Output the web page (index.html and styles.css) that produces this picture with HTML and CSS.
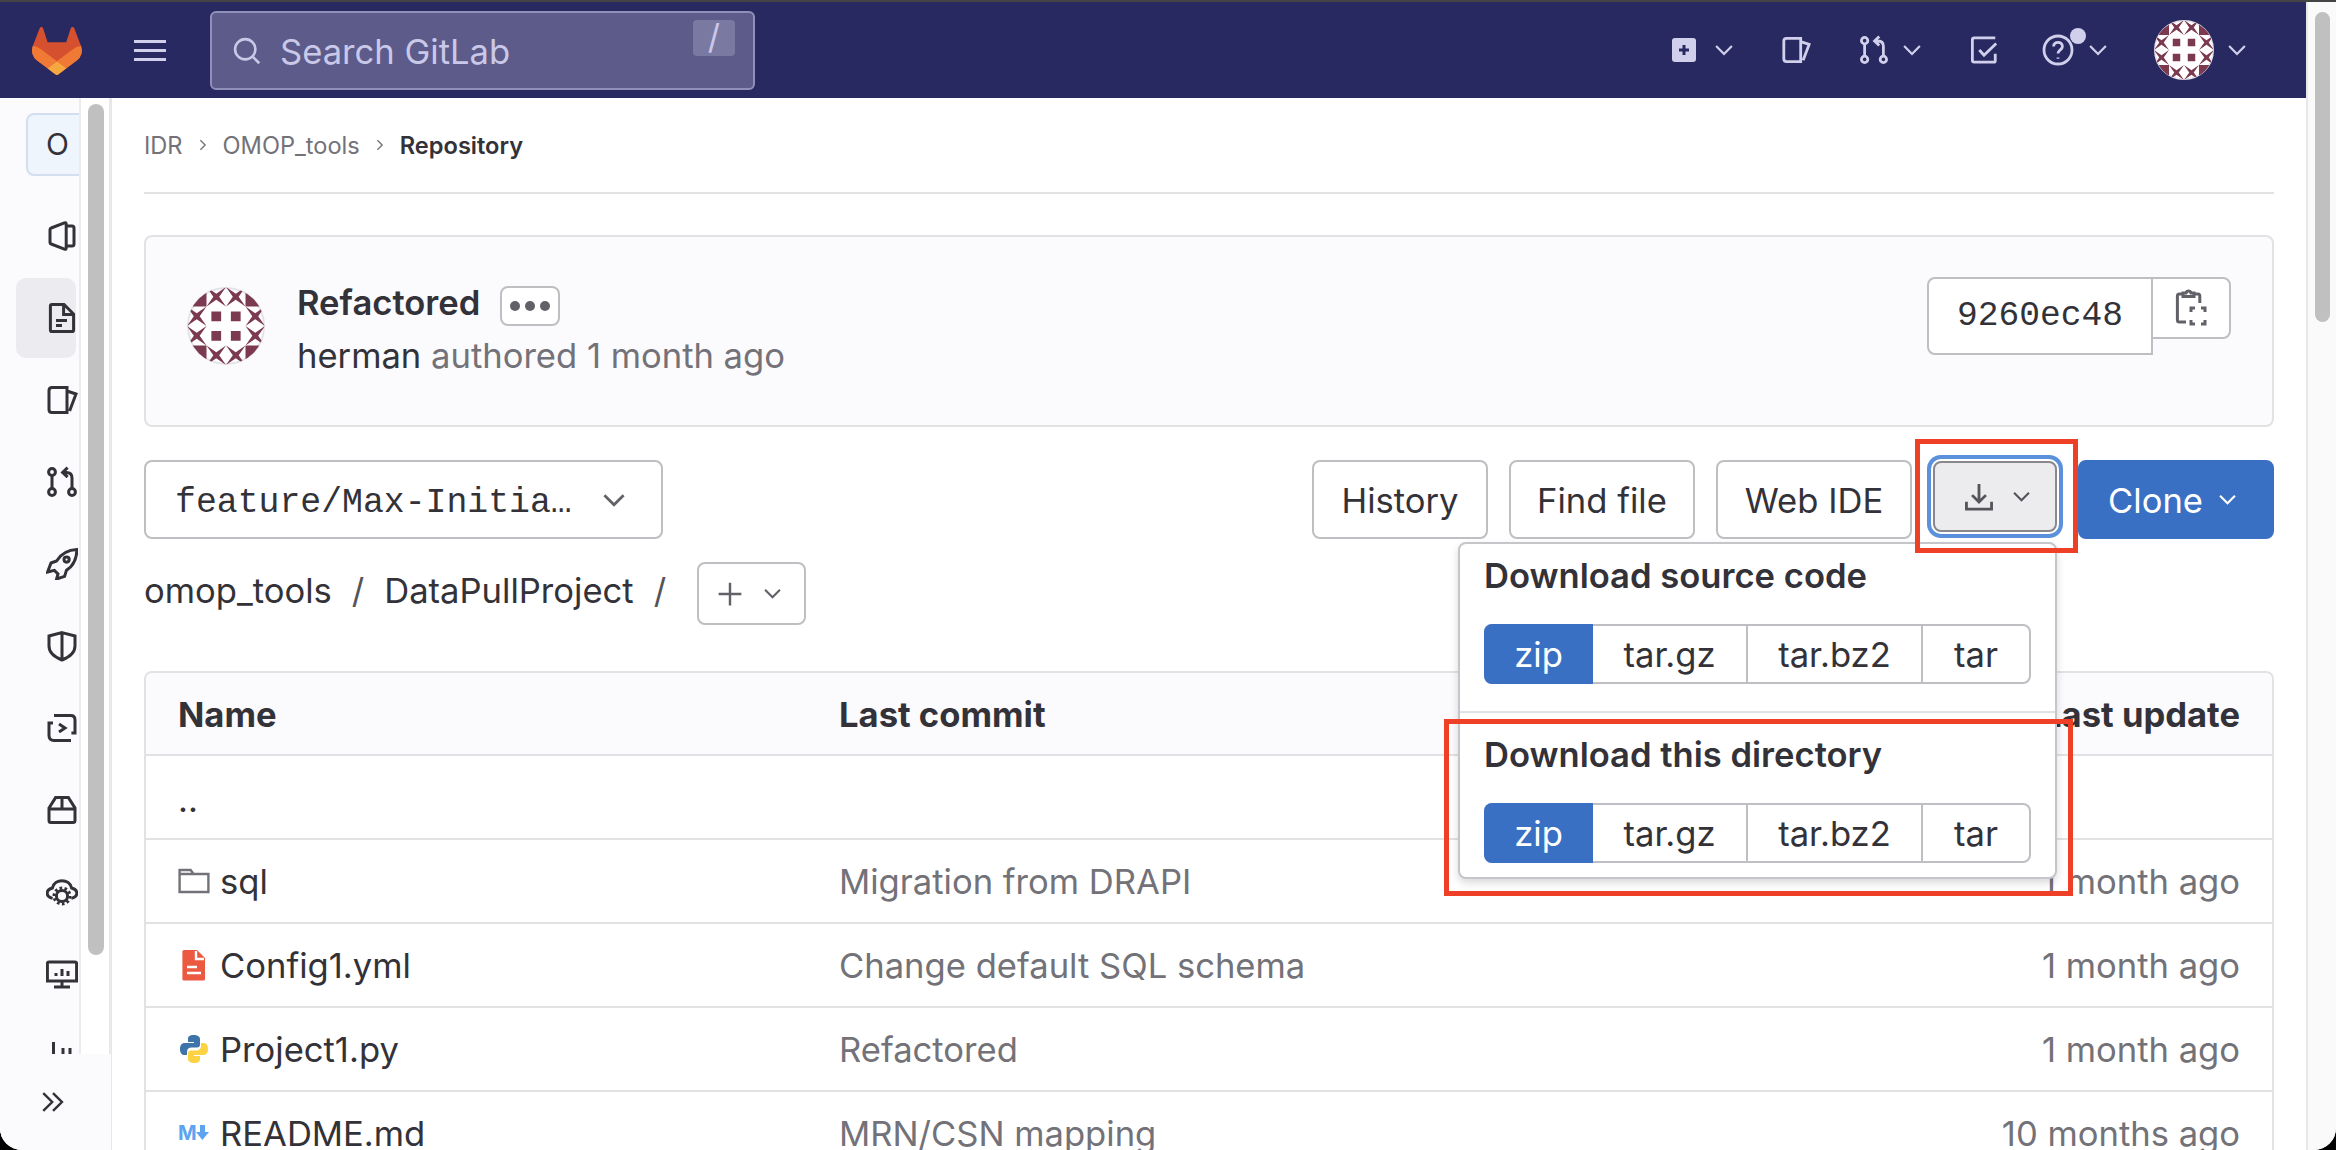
FILE: index.html
```html
<!DOCTYPE html>
<html lang="en">
<head>
    <meta charset="UTF-8">
    <meta name="viewport" content="width=device-width, initial-scale=1.0">
    <title>Repository - OMOP_tools</title>
    <link rel="stylesheet" href="styles.css">
</head>
<body>
<!-- icon set, 16 grid -->
<svg class="defs" width="0" height="0">
    <symbol id="i-chev" viewBox="0 0 16 16"><path d="M1 4.500 8 11.500 15 4.500"/></symbol>
    <symbol id="i-project" viewBox="0 0 16 16"><path d="M2.600 4 9.200 1.400q.9-.3.9.6v12q0 .9-.9.6L2.600 12q-.6-.2-.6-.8V4.800q0-.6.6-.8zM10.100 3h2.900q1 0 1 1v8q0 1-1 1h-2.900"/></symbol>
    <symbol id="i-doc" viewBox="0 0 16 16"><path d="M3 1.200h6L13.800 6v8q0 .8-.8.8H3q-.8 0-.8-.8V2q0-.8.8-.8zM8.800 1.200V6.200h5M5 9.200h5.500M5 11.800h3"/></symbol>
    <symbol id="i-issues" viewBox="0 0 16 16"><path d="M3 1.800h7.500v12.400H3q-1.500 0-1.500-1.500V3.300Q1.500 1.800 3 1.800zM10.500 3.500 15 5l-3.200 8.500"/></symbol>
    <symbol id="i-mr" viewBox="0 0 16 16"><circle cx="3" cy="3" r="1.700"/><circle cx="3" cy="13" r="1.700"/><circle cx="13" cy="13" r="1.700"/><path d="M3 4.700v6.600M13 11.300V6q0-2.800-2.800-2.800H8.500M10.800.8 8.300 3.200l2.500 2.400"/></symbol>
    <symbol id="i-rocket" viewBox="0 0 16 16"><path d="M15.500.8C10.500 1 7.500 3 5.300 6.500L2.500 7.500.8 12l3.400-.8L6 13l-.7 2.500 4-1.300.9-3C13.800 9 15.300 5.500 15.500.8z"/><circle cx="10.300" cy="5.800" r="1.300"/></symbol>
    <symbol id="i-shield" viewBox="0 0 16 16"><path d="M8 1.300 14.500 3v5c0 3.200-2.700 5.500-6.500 7C4.200 13.500 1.500 11.200 1.500 8V3zM8 1.300V15"/></symbol>
    <symbol id="i-ci" viewBox="0 0 16 16"><path d="M4 1.800h8.300q2.200 0 2.200 2.200v6.500h-1.800M12.500 14.200H4q-2.500 0-2.500-2.500V5.500h2M6.500 6l3 2-3 2"/></symbol>
    <symbol id="i-package" viewBox="0 0 16 16"><path d="M1.500 7 4.800 1.800h6.400L14.500 7v6.200q0 1-1 1h-11q-1 0-1-1zM1.500 7.500h13M8 1.800v5.700"/></symbol>
    <symbol id="i-cloud" viewBox="0 0 16 16"><path d="M3.300 11.200C-.2 10.500-.4 7 3.200 6c1-4.800 8.600-4.800 9.600 0 3.600 1 3.400 4.500-.1 5.200"/><circle cx="8" cy="10" r="2.800"/><circle cx="8" cy="10" r="4" stroke-dasharray="1.300 1.200"/></symbol>
    <symbol id="i-monitor" viewBox="0 0 16 16"><path d="M1.500 2h13q.8 0 .8.800v8.700H.7V2.800q0-.8.8-.8zM4 14.500h8M8 11.500v3M5 7.500v1.500M8 5.500v3.500M11 6.500v2.500"/></symbol>
    <symbol id="i-help" viewBox="0 0 16 16"><circle cx="8" cy="8" r="7"/><path d="M5.800 6.200C5.800 3.500 10.200 3.500 10.200 6.200 10.200 8 8 7.800 8 9.800M8 11.800v.6"/></symbol>
    <symbol id="i-todo" viewBox="0 0 16 16"><path d="M14 1.500H2.800q-1 0-1 1v11q0 1 1 1h10.400q.8 0 .8-.8V10M5.500 8l2.500 2.800L14.500 4.500"/></symbol>
    <symbol id="i-avatar" viewBox="0 0 80 80">
        <circle cx="40" cy="40" r="39" fill="#fff" stroke="#e4e3ea" stroke-width="2"/>
        <g fill="#7b3a4f" clip-path="url(#avatar-clip)">
            <path d="M0 0h20v20H0zM60 0h20v20H60zM0 60h20v20H0zM60 60h20v20H60z"/>
            <path id="x-cell" d="M20 0l10 7 10-7-7 10 7 10-10-7-10 7 7-10z"/>
            <use href="#x-cell" x="20"/>
            <use href="#x-cell" y="60"/>
            <use href="#x-cell" x="20" y="60"/>
            <use href="#x-cell" x="-20" y="20"/>
            <use href="#x-cell" x="-20" y="40"/>
            <use href="#x-cell" x="40" y="20"/>
            <use href="#x-cell" x="40" y="40"/>
            <path d="M25 25h10v10H25zM45 25h10v10H45zM25 45h10v10H25zM45 45h10v10H45z"/>
        </g>
    </symbol>
    <clipPath id="avatar-clip"><circle cx="40" cy="40" r="39.500"/></clipPath>
</svg>

<div class="window">
    <div class="page">
        <header class="navbar">
            <svg class="logo" viewBox="0 0 25 24">
                <path fill="#d4502f" d="m24.507 9.500-.034-.09L21.082.562a.896.896 0 0 0-1.694.091l-2.290 7.010H7.825L5.535.653a.898.898 0 0 0-1.694-.09L.451 9.411.416 9.500a6.297 6.297 0 0 0 2.090 7.278l.012.01.03.022 5.160 3.867 2.560 1.935 1.554 1.176a1.051 1.051 0 0 0 1.268 0l1.555-1.176 2.560-1.935 5.197-3.890.014-.01A6.297 6.297 0 0 0 24.507 9.500Z"/>
                <path fill="#f07a35" d="m24.507 9.500-.034-.09a11.440 11.440 0 0 0-4.560 2.051l-7.447 5.632 4.742 3.584 5.197-3.890.014-.01A6.297 6.297 0 0 0 24.507 9.500Z"/>
                <path fill="#f5a83f" d="m7.707 20.677 2.560 1.935 1.555 1.176a1.051 1.051 0 0 0 1.268 0l1.555-1.176 2.560-1.935-4.743-3.584-4.755 3.584Z"/>
                <path fill="#f07a35" d="M5.010 11.461a11.430 11.430 0 0 0-4.560-2.050L.416 9.500a6.297 6.297 0 0 0 2.090 7.278l.012.01.03.022 5.160 3.867 4.745-3.584-7.444-5.632Z"/>
            </svg>
            <div class="burger"><span></span><span></span><span></span></div>
            <div class="search">
                <svg class="search-icon ico" viewBox="0 0 16 16"><circle cx="7" cy="7" r="5.800"/><path d="m11.200 11.200 3.800 3.800"/></svg>
                <span class="search-text">Search GitLab</span>
                <span class="search-key">/</span>
            </div>
            <div class="nav-right">
                <svg class="nav-plus" viewBox="0 0 24 24"><rect width="24" height="24" rx="3" fill="#d1d0ec"/><path d="M12 7v10M7 12h10" stroke="#292961" stroke-width="3"/></svg>
                <svg class="ico nav-chev chev-plus"><use href="#i-chev"/></svg>
                <svg class="ico nav-icon gap-icon"><use href="#i-issues"/></svg>
                <svg class="ico nav-icon gap-icon"><use href="#i-mr"/></svg>
                <svg class="ico nav-chev"><use href="#i-chev"/></svg>
                <svg class="ico nav-icon gap-icon"><use href="#i-todo"/></svg>
                <span class="nav-help">
                    <svg class="ico nav-help-icon"><use href="#i-help"/></svg>
                    <span class="nav-dot"></span>
                </span>
                <svg class="ico nav-chev chev-help"><use href="#i-chev"/></svg>
                <svg class="nav-avatar"><use href="#i-avatar"/></svg>
                <svg class="ico nav-chev"><use href="#i-chev"/></svg>
            </div>
        </header>

        <div class="body-row">
            <aside class="sidebar">
                <div class="rail">
                    <div class="context-tile">O</div>
                    <ul class="rail-list">
                        <li><svg class="ico"><use href="#i-project"/></svg></li>
                        <li class="active"><svg class="ico"><use href="#i-doc"/></svg></li>
                        <li><svg class="ico"><use href="#i-issues"/></svg></li>
                        <li><svg class="ico"><use href="#i-mr"/></svg></li>
                        <li><svg class="ico"><use href="#i-rocket"/></svg></li>
                        <li><svg class="ico"><use href="#i-shield"/></svg></li>
                        <li><svg class="ico"><use href="#i-ci"/></svg></li>
                        <li><svg class="ico"><use href="#i-package"/></svg></li>
                        <li><svg class="ico"><use href="#i-cloud"/></svg></li>
                        <li><svg class="ico"><use href="#i-monitor"/></svg></li>
                        <li class="clipped"><svg class="ico partial"><path d="M7.500 0V14M17 6V14M24 6V14"/></svg></li>
                    </ul>
                </div>
                <div class="side-scroll"><div class="side-thumb"></div></div>
                <div class="collapse">
                    <svg class="ico collapse-icon" viewBox="0 0 16 16"><path d="M2 2.500 7.500 8 2 13.500M8 2.500 13.500 8 8 13.500"/></svg>
                </div>
            </aside>

            <main class="content">
                <nav class="crumbs">
                    <span>IDR</span>
                    <svg class="ico crumb-sep" viewBox="0 0 16 16"><path d="m5 2.500 5.500 5.500L5 13.500"/></svg>
                    <span>OMOP_tools</span>
                    <svg class="ico crumb-sep" viewBox="0 0 16 16"><path d="m5 2.500 5.500 5.500L5 13.500"/></svg>
                    <strong>Repository</strong>
                </nav>

                <section class="commit">
                    <svg class="commit-avatar"><use href="#i-avatar"/></svg>
                    <div class="commit-info">
                        <div class="commit-title">
                            <strong>Refactored</strong>
                            <span class="more-btn"><i></i><i></i><i></i></span>
                        </div>
                        <div class="commit-meta"><span class="author">herman</span> authored 1 month ago</div>
                    </div>
                    <div class="commit-sha">
                        <span class="sha">9260ec48</span>
                        <span class="copy-btn">
                            <svg class="ico copy-icon" viewBox="0 0 16 20"><path d="M9.800 3h1.600q1 0 1 1v3.500M4 3H2.200q-1 0-1 1v12q0 1 1 1h3.300M4 4.200V2.500h1.500a1.300 1.300 0 0 1 2.500 0h1.500v1.700z"/><path d="M8 12v-2h2M13 10h2v2M15 16v2h-2M10 18H8v-2"/></svg>
                        </span>
                    </div>
                </section>

                <div class="tree-bar">
                    <div class="branch-btn">
                        <span class="branch-name">feature/Max-Initia…</span>
                        <svg class="ico chev-md"><use href="#i-chev"/></svg>
                    </div>
                    <div class="tree-actions">
                        <span class="btn btn-history">History</span>
                        <span class="btn btn-find">Find file</span>
                        <span class="btn btn-ide">Web IDE</span>
                        <div class="download-wrap">
                            <span class="download-btn">
                                <svg class="ico dl-icon" viewBox="0 0 16 16"><path d="M8 1v9.500M4.300 7 8 10.700 11.700 7M1.300 10.500v4h13.400v-4"/></svg>
                                <svg class="ico chev-sm"><use href="#i-chev"/></svg>
                            </span>
                            <div class="download-menu">
                                <div class="menu-part">
                                    <h3>Download source code</h3>
                                    <div class="format-group">
                                        <span class="fmt-zip">zip</span><span class="fmt-gz">tar.gz</span><span class="fmt-bz">tar.bz2</span><span class="fmt-tar">tar</span>
                                    </div>
                                </div>
                                <div class="menu-part menu-part-second">
                                    <h3>Download this directory</h3>
                                    <div class="format-group">
                                        <span class="fmt-zip">zip</span><span class="fmt-gz">tar.gz</span><span class="fmt-bz">tar.bz2</span><span class="fmt-tar">tar</span>
                                    </div>
                                </div>
                            </div>
                        </div>
                        <span class="btn btn-clone">Clone <svg class="ico chev-sm"><use href="#i-chev"/></svg></span>
                    </div>
                </div>

                <div class="path-row">
                    <span class="path-text">omop_tools</span>
                    <span class="path-text path-sep">/</span>
                    <span class="path-text">DataPullProject</span>
                    <span class="path-text path-sep">/</span>
                    <span class="add-btn">
                        <svg class="ico plus-icon" viewBox="0 0 16 16"><path d="M8 1v14M1 8h14"/></svg>
                        <svg class="ico chev-sm"><use href="#i-chev"/></svg>
                    </span>
                </div>

                <section class="files">
                    <div class="file-row file-head">
                        <span class="col-name">Name</span>
                        <span class="col-commit">Last commit</span>
                        <span class="col-date">Last update</span>
                    </div>
                    <div class="file-row">
                        <span class="col-name dots">..</span>
                    </div>
                    <div class="file-row">
                        <span class="col-name">
                            <svg class="ico file-icon folder" viewBox="0 0 16 16"><path d="M.8 2.500h5.500l1.500 2h7.400v9H.8zM.8 4.500h7"/></svg>sql
                        </span>
                        <span class="col-commit">Migration from DRAPI</span>
                        <span class="col-date">1 month ago</span>
                    </div>
                    <div class="file-row">
                        <span class="col-name">
                            <svg class="file-icon" viewBox="0 0 16 16"><path fill="#ec5941" d="M3 .5h6.500L13.500 4.500V15q0 .8-.8.8H3q-.8 0-.8-.8V1.300Q2.200.5 3 .5z"/><path d="M9 1v4h4M4.500 9h5M4.500 12h7" fill="none" stroke="#fff" stroke-width="1.200"/></svg>Config1.yml
                        </span>
                        <span class="col-commit">Change default SQL schema</span>
                        <span class="col-date">1 month ago</span>
                    </div>
                    <div class="file-row">
                        <span class="col-name">
                            <svg class="file-icon" viewBox="0 0 16 16"><path fill="#3f74a8" d="M8 1C5.500 1 5 2 5 3v1.500h3V5H3.300C2 5 1 6 1 8s1 3 2.200 3H4.500V9.500C4.500 8 5.500 7.300 6.800 7.300h2.700C10.500 7.300 11 6.700 11 5.800V3c0-1.200-1.300-2-3-2z"/><path fill="#fdd343" d="M8 15c2.500 0 3-1 3-2v-1.500H8V11h4.700C14 11 15 10 15 8s-1-3-2.200-3H11.500v1.500c0 1.500-1 2.200-2.300 2.200H6.500C5.500 8.700 5 9.300 5 10.200V13c0 1.200 1.300 2 3 2z"/></svg>Project1.py
                        </span>
                        <span class="col-commit">Refactored</span>
                        <span class="col-date">1 month ago</span>
                    </div>
                    <div class="file-row">
                        <span class="col-name">
                            <svg class="file-icon" viewBox="0 0 16 16"><text x="0" y="11.500" class="md-m">M</text><path fill="#5ea3f0" d="M11 4h2.500v3.500H15.500L12.200 11.500 9 7.500h2z"/></svg>README.md
                        </span>
                        <span class="col-commit">MRN/CSN mapping</span>
                        <span class="col-date">10 months ago</span>
                    </div>
                </section>
            </main>
        </div>
    </div>

    <div class="page-scroll"><div class="page-thumb"></div></div>

    <!-- red annotation boxes -->
    <div class="mark mark-btn"></div>
    <div class="mark mark-dir"></div>
</div>
</body>
</html>
```

FILE: styles.css
```css
* {
    box-sizing: border-box;
}

html,
body {
    margin: 0;
    padding: 0;
    height: 1150px;
    overflow: hidden;
    background-color: #000;
}

body {
    font-family: Inter, "Noto Sans", sans-serif;
    font-size: 34.6px;
    color: #333238;
}

.defs {
    position: absolute;
}

.ico {
    width: 32px;
    height: 32px;
    fill: none;
    stroke: currentColor;
    stroke-width: 1.5;
    flex: none;
}

.window {
    position: relative;
    height: 1150px;
    display: flex;
    background-color: #fff;
    border-top: 2px solid #444;
    border-radius: 0 0 22px 22px;
    overflow: hidden;
}

.page {
    flex: 1;
    min-width: 0;
    display: flex;
    flex-direction: column;
}

/* top bar */
.navbar {
    height: 96px;
    flex: none;
    display: flex;
    align-items: center;
    padding: 0 60px 0 32px;
    background-color: #292961;
    color: #d1d0ec;
}

.logo {
    width: 50px;
    height: 48px;
    margin-top: 2px;
}

.burger {
    display: flex;
    flex-direction: column;
    gap: 6px;
    width: 32px;
    margin-left: 52px;
}

.burger span {
    height: 3px;
    background-color: #d1d0ec;
}

.search {
    width: 545px;
    height: 79px;
    margin-left: 44px;
    margin-top: 1px;
    display: flex;
    align-items: center;
    padding: 0 18px 0 21px;
    background-color: #5c5b8a;
    border: 2px solid #8f8fb8;
    border-radius: 6px;
    color: #c9c8e8;
}

.search-icon {
    width: 28px;
    height: 28px;
}

.search-text {
    margin-left: 19px;
    flex: 1;
}

.search-key {
    width: 42px;
    height: 36px;
    margin-top: -26px;
    background-color: #7a79a2;
    border-radius: 4px;
    text-align: center;
    line-height: 34px;
    font-size: 34px;
}

.nav-right {
    margin-left: auto;
    display: flex;
    align-items: center;
}

.nav-plus {
    width: 24px;
    height: 24px;
}

.nav-chev {
    width: 18px;
    height: 18px;
    margin-left: 14px;
    stroke-width: 2;
}

.chev-plus {
    margin-left: 19px;
}

.nav-icon {
    width: 30px;
    height: 30px;
}

.gap-icon {
    margin-left: 48px;
}

.nav-help {
    position: relative;
    margin-left: 43px;
    display: flex;
}

.nav-help-icon {
    width: 32px;
    height: 32px;
    stroke-width: 1.4;
}

.nav-dot {
    position: absolute;
    top: -6px;
    right: -12px;
    width: 16px;
    height: 16px;
    border-radius: 50%;
    background-color: #d1d0ec;
}

.chev-help {
    margin-left: 15px;
}

.nav-avatar {
    width: 60px;
    height: 60px;
    margin-left: 47px;
}

.body-row {
    flex: 1;
    display: flex;
    min-height: 0;
}

/* left sidebar */
.sidebar {
    position: relative;
    width: 112px;
    flex: none;
    display: flex;
    border-right: 3px solid #e8e8ea;
}

.rail {
    width: 81px;
    flex: none;
    padding-top: 15px;
    background-color: #fbfafd;
    border-right: 2px solid #ececef;
    overflow: hidden;
    color: #333238;
}

.context-tile {
    width: 70px;
    height: 63px;
    margin-left: 26px;
    padding-left: 18px;
    line-height: 59px;
    font-size: 30px;
    background-color: #eef5fd;
    border: 2px solid #d3dfee;
    border-radius: 8px;
}

.rail-list {
    list-style: none;
    margin: 19px 0 0;
    padding: 0;
}

.rail-list li {
    height: 82px;
    display: flex;
    align-items: center;
    padding-left: 46px;
}

.rail-list li.active {
    margin: 1px 0 1px 16px;
    height: 80px;
    width: 60px;
    padding-left: 30px;
    background-color: #ebebf0;
    border-radius: 10px;
}

.rail-list li.clipped {
    align-items: flex-start;
    padding-top: 27px;
}

.partial {
    height: 14px;
    stroke-width: 3;
}

.side-scroll {
    flex: 1;
    padding: 6px 4px 0 7px;
    background-color: #fff;
}

.side-thumb {
    width: 16px;
    height: 851px;
    background-color: #c0c0c0;
    border-radius: 8px;
}

.collapse {
    position: absolute;
    left: 0;
    bottom: 0;
    width: 111px;
    height: 96px;
    background-color: #fbfafd;
    display: flex;
    align-items: center;
    padding-left: 40px;
}

.collapse-icon {
    width: 26px;
    height: 26px;
}

/* main column */
.content {
    flex: 1;
    min-width: 0;
    padding: 0 32px;
    overflow: hidden;
}

.crumbs {
    height: 96px;
    display: flex;
    align-items: center;
    gap: 13px;
    border-bottom: 2px solid #e2e2e4;
    font-size: 23.6px;
    color: #737278;
}

.crumbs strong {
    color: #333238;
    font-weight: 600;
}

.crumb-sep {
    width: 14px;
    height: 14px;
}

.commit {
    height: 192px;
    margin-top: 41px;
    display: flex;
    align-items: flex-start;
    padding: 40px 41px 0 41px;
    background-color: #fbfafd;
    border: 2px solid #e2e2e4;
    border-radius: 8px;
}

.commit-avatar {
    width: 78px;
    height: 78px;
    margin-top: 10px;
    flex: none;
}

.commit-info {
    margin-left: 32px;
    flex: 1;
}

.commit-title {
    display: flex;
    align-items: center;
    gap: 20px;
    height: 50px;
}

.commit-title strong {
    margin-top: -1px;
    font-weight: 600;
}

.more-btn {
    width: 60px;
    height: 40px;
    display: flex;
    align-items: center;
    justify-content: center;
    gap: 5px;
    background-color: #fff;
    border: 2px solid #bfbfc3;
    border-radius: 8px;
    margin-top: 8px;
}

.more-btn i {
    width: 10px;
    height: 10px;
    border-radius: 50%;
    background-color: #626168;
}

.commit-meta {
    margin-top: 7px;
    color: #737278;
}

.author {
    color: #333238;
}

.commit-sha {
    display: flex;
    align-items: flex-start;
}

.sha {
    width: 226px;
    height: 78px;
    display: block;
    text-align: center;
    line-height: 74px;
    font-family: "Liberation Mono", monospace;
    font-size: 34.6px;
    background-color: #fff;
    border: 2px solid #bfbfc3;
    border-radius: 8px 0 0 8px;
}

.copy-btn {
    width: 80px;
    height: 62px;
    margin-left: -2px;
    display: flex;
    align-items: center;
    justify-content: center;
    background-color: #fff;
    border: 2px solid #bfbfc3;
    border-radius: 0 8px 8px 0;
    color: #626168;
}

.copy-icon {
    width: 32px;
    height: 40px;
}

.tree-bar {
    height: 79px;
    margin-top: 33px;
    display: flex;
    justify-content: space-between;
}

.branch-btn {
    width: 519px;
    display: flex;
    align-items: center;
    justify-content: space-between;
    padding: 0 36px 0 29px;
    background-color: #fff;
    border: 2px solid #bfbfc3;
    border-radius: 8px;
}

.branch-name {
    margin-top: 5px;
    font-family: "Liberation Mono", monospace;
    font-size: 34.8px;
}

.chev-md {
    width: 22px;
    height: 22px;
    stroke-width: 2;
    color: #626168;
}

.chev-sm {
    width: 17px;
    height: 17px;
    stroke-width: 2;
}

.tree-actions {
    display: flex;
    gap: 21px;
}

.btn {
    display: flex;
    align-items: center;
    justify-content: center;
    background-color: #fff;
    border: 2px solid #bfbfc3;
    border-radius: 8px;
}

.btn-history {
    width: 176px;
}

.btn-find {
    width: 186px;
}

.btn-ide {
    width: 196px;
}

.btn-clone {
    width: 196px;
    gap: 16px;
    padding-right: 8px;
    color: #fff;
    background-color: #3a70c4;
    border-color: #3a70c4;
}

.download-wrap {
    position: relative;
    width: 124px;
}

.download-btn {
    height: 71px;
    display: flex;
    align-items: center;
    gap: 19px;
    padding-left: 29px;
    margin-top: 1px;
    color: #55545a;
    background-color: #ececef;
    border: 2px solid #89888d;
    border-radius: 8px;
    box-shadow: 0 0 0 2px #fff, 0 0 0 6px #5a90dc;
}

.dl-icon {
    width: 30px;
    height: 30px;
}

.download-menu {
    position: absolute;
    z-index: 5;
    top: 82px;
    right: 0;
    width: 599px;
    height: 337px;
    background-color: #fff;
    border: 2px solid #c6c6ca;
    border-radius: 8px;
    box-shadow: 0 4px 8px rgba(0, 0, 0, 0.15);
}

.menu-part {
    height: 167px;
    padding: 11px 24px 0 24px;
}

.menu-part-second {
    border-top: 2px solid #e2e2e4;
    padding-top: 21px;
}

.menu-part h3 {
    margin: 0;
    font-size: 34.6px;
    font-weight: 600;
    line-height: 40px;
}

.format-group {
    display: flex;
    height: 60px;
    margin-top: 29px;
    border: 2px solid #bfbfc3;
    border-radius: 8px;
}

.format-group span {
    display: flex;
    align-items: center;
    justify-content: center;
    border-right: 2px solid #bfbfc3;
}

.format-group span:last-child {
    border-right: none;
}

.format-group .fmt-zip {
    width: 109px;
    margin: -2px 0 -2px -2px;
    color: #fff;
    background-color: #3a70c4;
    border-right: none;
    border-radius: 8px 0 0 8px;
}

.fmt-gz {
    width: 155px;
}

.fmt-bz {
    width: 175px;
}

.fmt-tar {
    flex: 1;
}

.path-row {
    height: 63px;
    margin-top: 23px;
    display: flex;
    align-items: center;
}

.path-text {
    margin-top: -7px;
}

.path-sep {
    margin-left: 20px;
    margin-right: 20px;
    color: #55545a;
}

.add-btn {
    width: 109px;
    height: 63px;
    margin-left: 11px;
    display: flex;
    align-items: center;
    gap: 21px;
    padding-left: 18px;
    color: #626168;
    background-color: #fff;
    border: 2px solid #bfbfc3;
    border-radius: 8px;
}

.plus-icon {
    width: 26px;
    height: 26px;
}

.files {
    margin-top: 46px;
    border: 2px solid #e2e2e4;
    border-radius: 8px 8px 0 0;
    border-bottom: none;
}

.file-row {
    height: 84px;
    display: flex;
    align-items: center;
    padding: 0 32px;
    border-bottom: 2px solid #e2e2e4;
}

.file-head {
    height: 83px;
    background-color: #fbfafd;
    border-radius: 8px 8px 0 0;
    font-weight: 700;
}

.col-name {
    width: 661px;
    display: flex;
    align-items: center;
    gap: 10px;
}

.dots {
    margin-top: 3px;
}

.col-commit {
    flex: 1;
    color: #737278;
}

.file-head .col-commit,
.file-head .col-date {
    color: #333238;
}

.col-date {
    color: #737278;
}

.file-icon {
    width: 32px;
    height: 32px;
    flex: none;
}

.folder {
    color: #737278;
    stroke-width: 1.2;
}

.md-m {
    font-size: 10px;
    font-weight: 700;
    fill: #5ea3f0;
    stroke: none;
}

/* page scrollbar */
.page-scroll {
    width: 30px;
    flex: none;
    padding: 10px 6px 0 7px;
    background-color: #fafafa;
    border-left: 2px solid #e8e8ea;
}

.page-thumb {
    width: 15px;
    height: 310px;
    background-color: #c0c0c0;
    border-radius: 8px;
}

.mark {
    position: absolute;
    z-index: 9;
    border: 5px solid #ee4026;
}

.mark-btn {
    left: 1915px;
    top: 437px;
    width: 163px;
    height: 114px;
}

.mark-dir {
    left: 1444px;
    top: 717px;
    width: 629px;
    height: 177px;
}
```
